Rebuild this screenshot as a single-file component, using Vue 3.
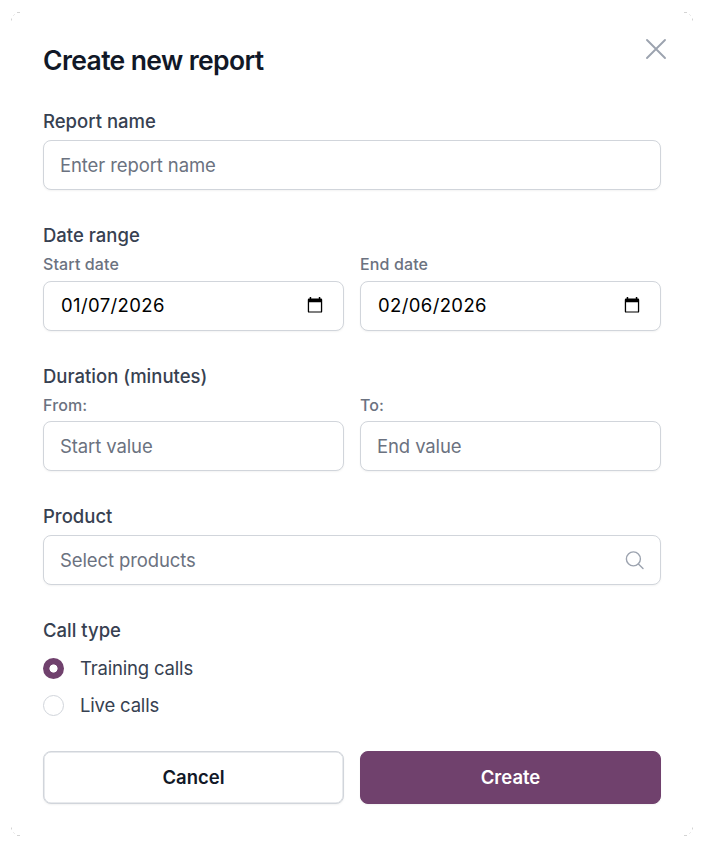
<script setup>
import { ref } from 'vue'

const name = ref('')
const startDate = ref('01/07/2026')
const endDate = ref('02/06/2026')
const from = ref('')
const to = ref('')
const product = ref('')
const callType = ref('training')
const callTypes = [
  { id: 'training', label: 'Training calls' },
  { id: 'live', label: 'Live calls' },
]
</script>

<template>
  <main class="dialog">
    <svg class="corner tl" viewBox="0 0 10 10"><path d="M.5 8.5V6.5M6 .5h3M2.500 3.500l1-1" /></svg>
    <svg class="corner tr" viewBox="0 0 10 10"><path d="M.5 8.5V6.5M6 .5h3M2.500 3.500l1-1" /></svg>
    <svg class="corner bl" viewBox="0 0 10 10"><path d="M.5 8.5V6.5M6 .5h3M2.500 3.500l1-1" /></svg>
    <svg class="corner br" viewBox="0 0 10 10"><path d="M.5 8.5V6.5M6 .5h3M2.500 3.500l1-1" /></svg>

    <header class="head">
      <h1>Create new report</h1>
      <button class="close" type="button" aria-label="Close">
        <svg width="22" height="22" viewBox="0 0 22 22"><path d="M2 2l18 18M20 2L2 20" /></svg>
      </button>
    </header>

    <form class="form" @submit.prevent>
      <section class="group name">
        <label class="label">Report name</label>
        <div class="box"><input v-model="name" placeholder="Enter report name" /></div>
      </section>

      <section class="group dates">
        <span class="label">Date range</span>
        <div class="pair">
          <div class="field">
            <label class="sub">Start date</label>
            <div class="box date">
              <input v-model="startDate" />
              <svg class="cal" width="16" height="18" viewBox="0 0 16 18"><path fill-rule="evenodd" d="M2.700 1h1.500v1.500h7.600V1h1.500v1.500h.7a1.200 1.200 0 0 1 1.200 1.200v11.700a1.200 1.200 0 0 1-1.200 1.200H2a1.200 1.200 0 0 1-1.200-1.200V3.700a1.200 1.200 0 0 1 1.200-1.200h.7zM2.100 6.200v9.200h11.800V6.200z" /></svg>
            </div>
          </div>
          <div class="field">
            <label class="sub">End date</label>
            <div class="box date">
              <input v-model="endDate" />
              <svg class="cal" width="16" height="18" viewBox="0 0 16 18"><path fill-rule="evenodd" d="M2.700 1h1.500v1.500h7.600V1h1.500v1.500h.7a1.200 1.200 0 0 1 1.200 1.200v11.700a1.200 1.200 0 0 1-1.200 1.200H2a1.200 1.200 0 0 1-1.200-1.200V3.700a1.200 1.200 0 0 1 1.200-1.200h.7zM2.100 6.200v9.200h11.800V6.200z" /></svg>
            </div>
          </div>
        </div>
      </section>

      <section class="group duration">
        <span class="label">Duration (minutes)</span>
        <div class="pair">
          <div class="field">
            <label class="sub">From:</label>
            <div class="box"><input v-model="from" placeholder="Start value" /></div>
          </div>
          <div class="field">
            <label class="sub">To:</label>
            <div class="box"><input v-model="to" placeholder="End value" /></div>
          </div>
        </div>
      </section>

      <section class="group product">
        <label class="label">Product</label>
        <div class="box lookup">
          <input v-model="product" placeholder="Select products" />
          <svg class="search" width="20" height="20" viewBox="0 0 20 20"><circle cx="8.400" cy="8.900" r="7" /><path d="M13.400 13.900l4.600 4.600" /></svg>
        </div>
      </section>

      <section class="group calls">
        <span class="label">Call type</span>
        <div class="options">
          <label v-for="t in callTypes" :key="t.id" class="option">
            <input v-model="callType" type="radio" :value="t.id" />
            <span>{{ t.label }}</span>
          </label>
        </div>
      </section>

      <footer class="pair actions">
        <button class="btn cancel" type="button">Cancel</button>
        <button class="btn create" type="submit">Create</button>
      </footer>
    </form>
  </main>
</template>

<style>
body {
  margin: 0;
  background: #fff;
}
</style>

<style scoped>
* {
  box-sizing: border-box;
}
.dialog {
  position: relative;
  width: 682px;
  height: 824px;
  margin: 12px 11px;
  padding: 31px 32px;
  background: #fff;
  font-family: Inter, "Liberation Sans", sans-serif;
  font-size: 18.5px;
  color: #374151;
}
.corner {
  position: absolute;
  width: 10px;
  height: 10px;
  fill: none;
  stroke: #c9c9c9;
  stroke-width: 0.8;
}
.tl { top: 0; left: 0; }
.tr { top: 0; right: 0; transform: scaleX(-1); }
.bl { bottom: 0; left: 0; transform: scaleY(-1); }
.br { bottom: 0; right: 0; transform: scale(-1); }
.head {
  display: flex;
  justify-content: space-between;
  align-items: flex-start;
  height: 34px;
}
h1 {
  margin: 0;
  font-size: 26.5px;
  line-height: 34px;
  font-weight: 600;
  letter-spacing: -0.62px;
  color: #111827;
}
.close {
  display: flex;
  margin: -5px -6px 0 0;
  padding: 0;
  border: 0;
  background: none;
}
.close svg {
  stroke: #9ca3af;
  stroke-width: 1.9;
  stroke-linecap: round;
}
.form {
  display: flex;
  flex-direction: column;
  padding-top: 32px;
}
.group {
  display: flex;
  flex-direction: column;
}
.name, .dates, .duration, .product { margin-bottom: 33px; }
.label {
  height: 24px;
  margin-bottom: 7px;
  font-weight: 500;
  line-height: 24px;
}
.pair {
  display: grid;
  grid-template-columns: repeat(2, minmax(0, 1fr));
  gap: 16px;
}
.sub {
  display: block;
  height: 20px;
  margin-bottom: 7px;
  font-size: 16px;
  font-weight: 500;
  line-height: 20px;
  letter-spacing: 0.12px;
  color: #6b7280;
}
.duration .sub { margin-bottom: 6px; }
.box {
  display: flex;
  align-items: center;
  height: 50px;
  padding: 0 16px;
  border: 1px solid #d1d5db;
  border-radius: 8px;
  background: #fff;
  box-shadow: 0 1px 2px rgba(0, 0, 0, 0.05);
}
.box input {
  flex: 1;
  min-width: 0;
  height: 26px;
  padding: 0;
  border: 0;
  outline: 0;
  background: none;
  font: inherit;
  letter-spacing: -0.11px;
  color: #000;
}
.box input::placeholder {
  color: #6b7280;
  opacity: 1;
}
.box.date { padding: 0 20px 2px 17px; }
.box.date input { letter-spacing: 0.38px; }
.box.lookup { padding-right: 15px; }
.cal { fill: #000; }
.search {
  fill: none;
  stroke: #9ca3af;
  stroke-width: 1.4;
  stroke-linecap: round;
}
.options {
  display: grid;
  gap: 13px;
  padding-top: 7px;
}
.option {
  display: flex;
  align-items: center;
  gap: 16px;
  height: 24px;
  letter-spacing: -0.18px;
}
.option input {
  appearance: none;
  width: 21px;
  height: 21px;
  margin: 0;
  border: 1px solid #d1d5db;
  border-radius: 50%;
  background: #fff;
}
.option input:checked {
  border: 0;
  background: radial-gradient(circle, #fff 3.700px, #70416d 4.400px);
}
.actions { padding-top: 34px; }
.btn {
  height: 53px;
  padding: 0 0 2px;
  border: 1px solid #d1d5db;
  border-radius: 8px;
  background: #fff;
  font: inherit;
  font-weight: 600;
  color: #111827;
  box-shadow: 0 1px 2px rgba(0, 0, 0, 0.05);
}
.cancel {
  box-shadow: inset 0 0 0 0.5px #d1d5db, 0 1px 2px rgba(0, 0, 0, 0.05);
}
.create {
  border-color: #70416d;
  background: #70416d;
  color: #fff;
}
</style>
